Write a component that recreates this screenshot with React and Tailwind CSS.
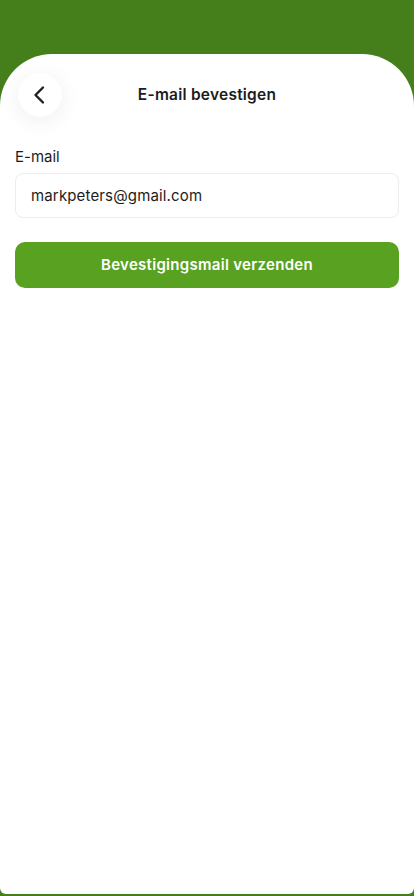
import React, { useState } from 'react';

function App() {
  const [email, setEmail] = useState('markpeters@gmail.com');

  return (
    <div className="h-[896px] bg-[#457f1c] pt-[54px] pb-[2px]" style={{ fontFamily: 'Inter, "Noto Sans", sans-serif' }}>
      <div className="h-full bg-white rounded-t-[52px] rounded-b-[6px] px-[15px]">
        {/* Header */}
        <div className="relative flex items-center justify-center h-[82px]">
          <button className="absolute left-[3px] top-[19px] w-[44px] h-[44px] rounded-full bg-white shadow-[0_4px_22px_rgba(0,0,0,0.07)] flex items-center justify-center">
            <svg width="24" height="24" viewBox="0 0 24 24" fill="none" stroke="#1f1f1f" strokeWidth="2.4" strokeLinecap="round" strokeLinejoin="round">
              <path d="M15 4.5 7.5 12l7.5 7.5" />
            </svg>
          </button>
          <h1 className="text-[15.5px] font-semibold tracking-[0.015em] text-[#1c1c1e]">E-mail bevestigen</h1>
        </div>

        {/* Form */}
        <label className="block mt-[11px] text-[15px] text-[#1c1c1e] leading-[20px]">E-mail</label>
        <input
          value={email}
          onChange={e => setEmail(e.target.value)}
          className="mt-[6px] w-full h-[45px] rounded-[8px] border border-[#ededed] px-[15px] text-[15px] tracking-[0.01em] text-[#1c1c1e] outline-none"
        />

        <button className="mt-[24px] w-full h-[46px] rounded-[10px] bg-[#58a121] text-white text-[15px] font-semibold tracking-[0.02em]">
          Bevestigingsmail verzenden
        </button>
      </div>
    </div>
  );
}

export default App;
